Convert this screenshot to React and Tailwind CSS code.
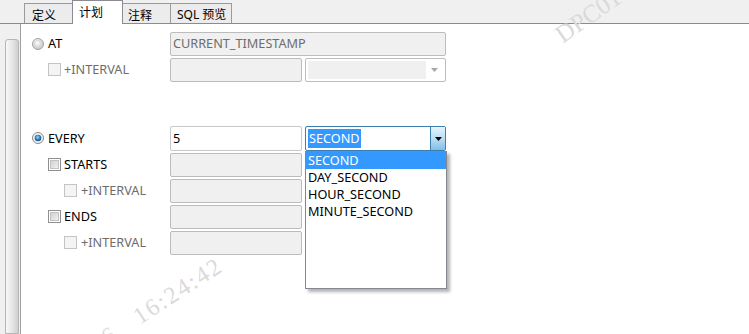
import React from "react";

function RadioOff() {
  return (
    <svg width="12" height="12" viewBox="0 0 12 12" className="shrink-0">
      <defs>
        <radialGradient id="rg-off" cx="0.4" cy="0.35" r="0.7">
          <stop offset="0" stopColor="#ffffff" />
          <stop offset="1" stopColor="#c4c4c4" />
        </radialGradient>
      </defs>
      <circle cx="6" cy="6" r="5.5" fill="url(#rg-off)" stroke="#a3a3a3" />
      <circle cx="6" cy="6" r="3.5" fill="none" stroke="#d6d6d6" />
    </svg>
  );
}

function RadioOn() {
  return (
    <svg width="12" height="12" viewBox="0 0 12 12" className="shrink-0">
      <defs>
        <radialGradient id="rg-on" cx="0.45" cy="0.4" r="0.6">
          <stop offset="0" stopColor="#9fdcff" />
          <stop offset="0.55" stopColor="#2f86c6" />
          <stop offset="1" stopColor="#154a78" />
        </radialGradient>
      </defs>
      <circle cx="6" cy="6" r="5.5" fill="#f2f2f2" stroke="#8a8a8a" />
      <circle cx="6" cy="6" r="3.3" fill="url(#rg-on)" />
    </svg>
  );
}

function CheckOn() {
  return (
    <svg width="13" height="13" viewBox="0 0 13 13" className="shrink-0">
      <defs>
        <linearGradient id="cb-on" x1="0" y1="0" x2="1" y2="1">
          <stop offset="0" stopColor="#cfcfcf" />
          <stop offset="1" stopColor="#f2f2f2" />
        </linearGradient>
      </defs>
      <rect x="0.5" y="0.5" width="12" height="12" fill="#ffffff" stroke="#8e8f8f" />
      <rect x="2.5" y="2.5" width="8" height="8" fill="url(#cb-on)" stroke="#c2c2c2" />
    </svg>
  );
}

function CheckOff() {
  return (
    <svg width="13" height="13" viewBox="0 0 13 13" className="shrink-0">
      <rect x="0.5" y="0.5" width="12" height="12" fill="#f4f4f4" stroke="#c4c4c4" />
    </svg>
  );
}

function Arrow({ color }) {
  return (
    <svg width="7" height="4" viewBox="0 0 7 4">
      <path d="M0 0h7L3.5 4z" fill={color} />
    </svg>
  );
}

function DisabledInput({ className, children }) {
  return <div className={className}>{children}</div>;
}

function DisabledSelect() {
  return (
    <div className="ml-[3px] flex h-full w-[141px] items-stretch rounded-[2px] border border-[#bcbcbc] bg-white p-[2px]">
      <div className="flex-1 bg-[#f0f0f0]" />
      <div className="flex w-[17px] items-center justify-center">
        <Arrow color="#a8a8a8" />
      </div>
    </div>
  );
}

export default function App() {
  return (
    <div className="relative h-[334px] w-[749px] overflow-hidden bg-white font-['Noto_Sans','Noto_Sans_CJK_SC',sans-serif] text-[12.7px] text-black">
      {/* Tab bar */}
      <div className="flex h-[24px] items-end border-b border-[#898c95] bg-[#f0f0f0] pl-[24px] text-[12px]">
        <div className="flex h-[20px] w-[48px] items-center border-l border-t border-[#9a9a9a] bg-[#ececec] pl-[7px] pt-[2px] font-['Noto_Sans_CJK_SC',sans-serif] leading-none">
          定义
        </div>
        <div className="-mb-px flex h-[24px] w-[51px] items-center border-l border-r border-t border-[#898c95] bg-white pb-[2px] pl-[6px] font-['Noto_Sans_CJK_SC',sans-serif] leading-none">
          计划
        </div>
        <div className="flex h-[20px] w-[48px] items-center border-r border-t border-[#9a9a9a] bg-[#ececec] pl-[5px] pt-[2px] font-['Noto_Sans_CJK_SC',sans-serif] leading-none">
          注释
        </div>
        <div className="flex h-[20px] w-[61px] items-center border-r border-t border-[#9a9a9a] bg-[#ececec] pl-[6px] pt-[2px] font-['Noto_Sans','Noto_Sans_CJK_SC',sans-serif] leading-none">
          SQL 预览
        </div>
      </div>

      {/* Body */}
      <div className="flex h-[310px]">
        {/* Left strip with scrollbar */}
        <div className="flex w-[21px] shrink-0 border-r border-[#a0a0a0] bg-[#f0f0f0] pl-[5px] pt-[15px]">
          <div className="h-full w-[14px] rounded-t-[3px] border border-[#b5b5b5] bg-linear-to-r from-[#f8f8f8] via-[#e6e6e6] to-[#cfcfcf]" />
        </div>

        {/* Content */}
        <div className="flex flex-1 flex-col gap-[2px] pt-[8px]">
          {/* AT */}
          <div className="flex h-[24px] items-center">
            <div className="flex w-[149px] items-center gap-[4px] pl-[11px]">
              <RadioOff />
              <span>AT</span>
            </div>
            <DisabledInput className="flex h-full w-[276px] items-center rounded-[2px] border border-[#bcbcbc] bg-[#f0f0f0] pl-[2px] text-[#6d6d6d]">
              CURRENT_TIMESTAMP
            </DisabledInput>
          </div>

          {/* +INTERVAL */}
          <div className="flex h-[24px] items-center">
            <div className="flex w-[149px] items-center gap-[3px] pl-[27px] text-[#6d6d6d]">
              <CheckOff />
              <span>+INTERVAL</span>
            </div>
            <DisabledInput className="h-full w-[132px] rounded-[2px] border border-[#bcbcbc] bg-[#f0f0f0]" />
            <DisabledSelect />
          </div>

          <div className="h-[40px]" />

          {/* EVERY */}
          <div className="flex h-[25px] items-center">
            <div className="flex w-[149px] items-center gap-[4px] pl-[11px]">
              <RadioOn />
              <span>EVERY</span>
            </div>
            <div className="flex h-full w-[132px] items-center rounded-[2px] border border-[#c8c8c8] bg-white pl-[2px]">
              5
            </div>
            <div className="relative ml-[3px] flex h-full w-[141px] items-stretch rounded-[2px] border border-[#3c7fb1] bg-white">
              <div className="flex flex-1 items-center pl-[2px]">
                <span className="bg-[#3399ff] px-[1px] leading-[19px] text-white">SECOND</span>
              </div>
              <div className="flex w-[15px] items-center justify-center border-l border-[#3c7fb1] bg-linear-to-b from-[#e6f4fc] via-[#b9def5] to-[#84bde4]">
                <Arrow color="#000000" />
              </div>
              {/* Dropdown list */}
              <div className="absolute left-[-1px] top-[24px] z-10 flex h-[138px] w-[142px] flex-col border border-[#828790] bg-white shadow-[3px_3px_3px_rgba(0,0,0,0.3)]">
                <div className="h-[17px] bg-[#3399ff] pl-[2px] leading-[17px] text-white">SECOND</div>
                <div className="h-[17px] pl-[2px] leading-[17px]">DAY_SECOND</div>
                <div className="h-[17px] pl-[2px] leading-[17px]">HOUR_SECOND</div>
                <div className="h-[17px] pl-[2px] leading-[17px]">MINUTE_SECOND</div>
              </div>
            </div>
          </div>

          {/* STARTS */}
          <div className="flex h-[24px] items-center">
            <div className="flex w-[149px] items-center gap-[3px] pl-[27px]">
              <CheckOn />
              <span>STARTS</span>
            </div>
            <DisabledInput className="h-full w-[132px] rounded-[2px] border border-[#bcbcbc] bg-[#f0f0f0]" />
          </div>

          {/* +INTERVAL */}
          <div className="flex h-[24px] items-center">
            <div className="flex w-[149px] items-center gap-[4px] pl-[43px] text-[#6d6d6d]">
              <CheckOff />
              <span>+INTERVAL</span>
            </div>
            <DisabledInput className="h-full w-[132px] rounded-[2px] border border-[#bcbcbc] bg-[#f0f0f0]" />
          </div>

          {/* ENDS */}
          <div className="flex h-[24px] items-center">
            <div className="flex w-[149px] items-center gap-[3px] pl-[27px]">
              <CheckOn />
              <span>ENDS</span>
            </div>
            <DisabledInput className="h-full w-[132px] rounded-[2px] border border-[#bcbcbc] bg-[#f0f0f0]" />
          </div>

          {/* +INTERVAL */}
          <div className="flex h-[24px] items-center">
            <div className="flex w-[149px] items-center gap-[4px] pl-[43px] text-[#6d6d6d]">
              <CheckOff />
              <span>+INTERVAL</span>
            </div>
            <DisabledInput className="h-full w-[132px] rounded-[2px] border border-[#bcbcbc] bg-[#f0f0f0]" />
          </div>
        </div>
      </div>

      {/* Watermarks */}
      <span className="pointer-events-none absolute left-[565px] top-[22px] origin-bottom-left -rotate-[35deg] whitespace-pre font-['Liberation_Serif',serif] text-[25px] leading-none text-[#dadada]">
        DPC0101
      </span>
      <span className="pointer-events-none absolute left-[110px] top-[325px] origin-bottom-left -rotate-[33deg] whitespace-pre font-['Liberation_Serif',serif] text-[24px] leading-none tracking-[2px] text-[#dadada]">
        6   16:24:42
      </span>
    </div>
  );
}
